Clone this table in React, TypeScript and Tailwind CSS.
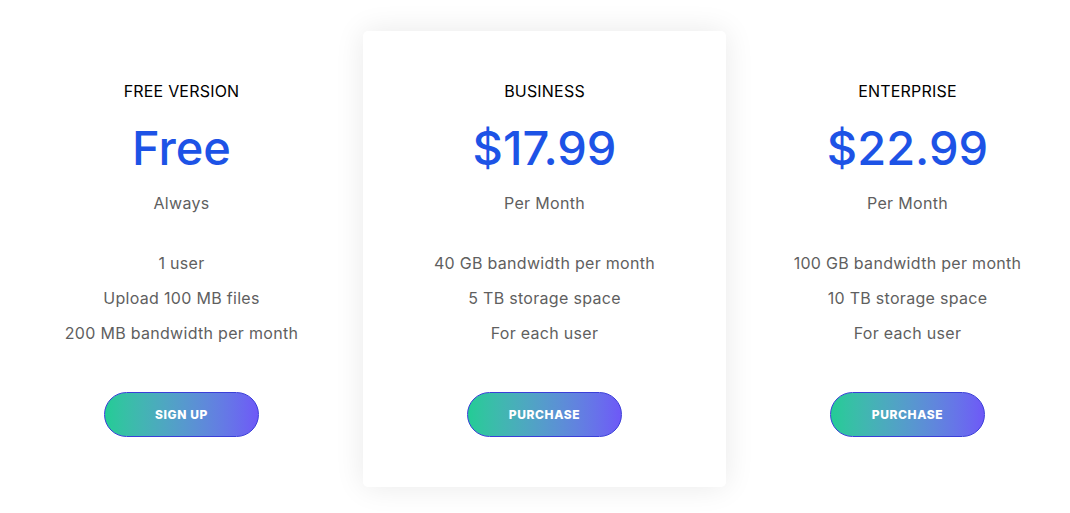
import React from "react";

const plans = [
  { name: "FREE VERSION", price: "Free", period: "Always", features: ["1 user", "Upload 100 MB files", "200 MB bandwidth per month"], cta: "SIGN UP", featured: false },
  { name: "BUSINESS", price: "$17.99", period: "Per Month", features: ["40 GB bandwidth per month", "5 TB storage space", "For each user"], cta: "PURCHASE", featured: true },
  { name: "ENTERPRISE", price: "$22.99", period: "Per Month", features: ["100 GB bandwidth per month", "10 TB storage space", "For each user"], cta: "PURCHASE", featured: false },
];

export default function App() {
  return (
    <div className="w-[1070px] h-[513px] overflow-hidden bg-white" style={{ fontFamily: "Inter, 'Noto Sans', sans-serif" }}>
      <div className="grid grid-cols-[363px_363px_363px] pt-[31px]">
        {plans.map((p) => (
          <div
            key={p.name}
            className={`h-[456px] flex flex-col items-center pt-[50px] rounded-[5px] ${p.featured ? "bg-white shadow-[0_0_30px_rgba(0,0,0,0.09)]" : ""}`}
          >
            <div className="text-[16px] leading-[20px] text-black tracking-[0.2px]">{p.name}</div>
            <div className="mt-[18px] text-[47px] leading-[58px] text-[#1d53e6] font-[450]">{p.price}</div>
            <div className="mt-[16px] text-[16px] leading-[20px] text-[#5f5f5f] tracking-[0.3px]">{p.period}</div>
            <div className="mt-[40px] flex flex-col items-center gap-[15px]">
              {p.features.map((f) => (
                <div key={f} className="text-[16px] leading-[20px] text-[#5f5f5f] tracking-[0.3px]">{f}</div>
              ))}
            </div>
            <button className="mt-[49px] w-[155px] h-[45px] rounded-full border border-[#3b3fd8] bg-gradient-to-r from-[#22cc95] to-[#6e58f7] text-white text-[12px] font-extrabold tracking-[0.6px]">
              {p.cta}
            </button>
          </div>
        ))}
      </div>
    </div>
  );
}
